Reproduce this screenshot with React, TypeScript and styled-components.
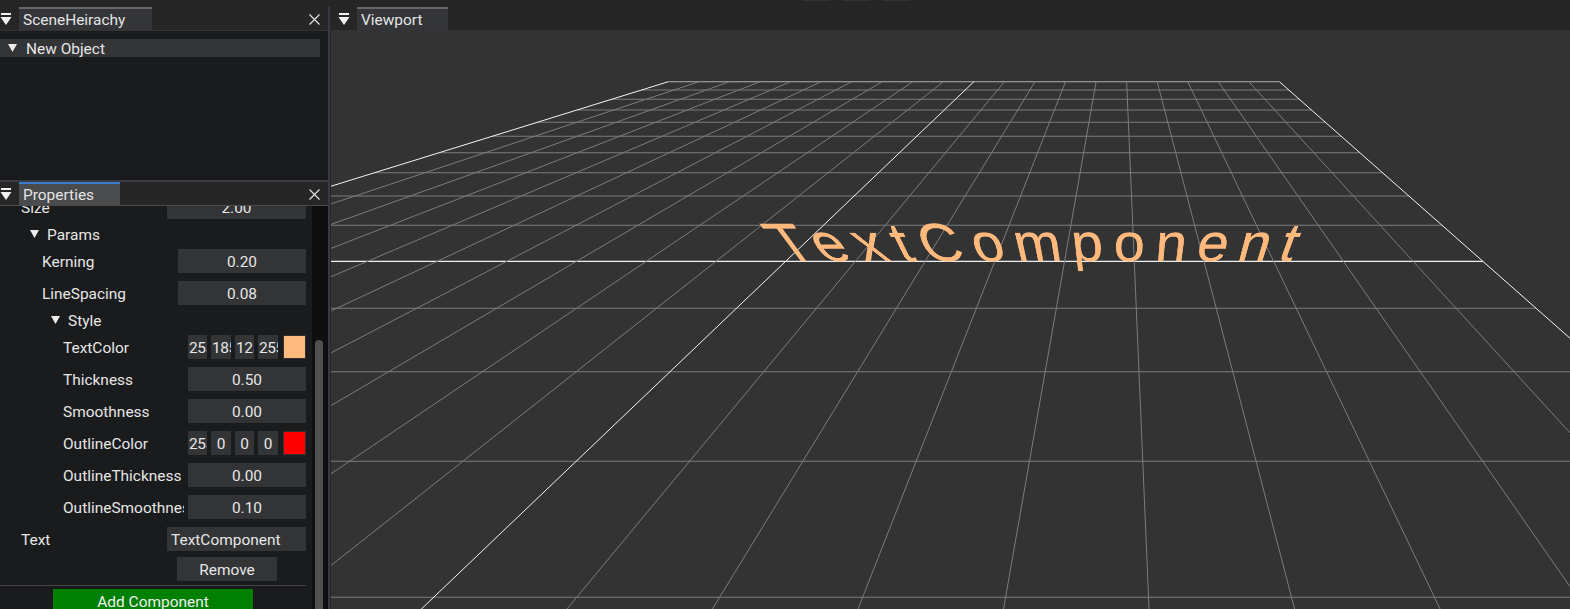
import React from 'react';
import styled, { createGlobalStyle } from 'styled-components';

const Global = createGlobalStyle`
  html, body { margin: 0; padding: 0; background: #262627; overflow: hidden; }
  #root { width: 1570px; height: 609px; }
`;

const Dock = styled.div`
  position: relative;
  display: flex;
  width: 1570px;
  height: 609px;
  overflow: hidden;
  background: #262627;
  color: #e6e6e6;
  font-family: Roboto, "Liberation Sans", sans-serif;
  font-size: 15.45px;
`;

const LeftColumn = styled.div`
  display: flex;
  flex-direction: column;
  width: 328px;
  flex: none;
`;

const Splitter = styled.div`
  width: 3px;
  flex: none;
  box-sizing: border-box;
  margin-top: 7px;
  background: #3a3a44;
  border-right: 1px solid #262627;
`;

const RightColumn = styled.div`
  display: flex;
  flex-direction: column;
  flex: 1;
  min-width: 0;
`;

const TitleBar = styled.div<{ $h: number; $line?: string; $pad: number }>`
  display: flex;
  align-items: flex-end;
  flex: none;
  box-sizing: border-box;
  height: ${p => p.$h}px;
  background: #262627;
  border-bottom: ${p => (p.$line ? `1px solid ${p.$line}` : 'none')};
  padding-left: ${p => p.$pad}px;
`;

const MenuButton = styled.svg`
  width: 12px;
  height: 12px;
  flex: none;
  margin: 0 7px 5px 0;
`;

const Tab = styled.div<{ $w: number; $bg: string; $over: string; $h: number }>`
  width: ${p => p.$w}px;
  height: ${p => p.$h}px;
  box-sizing: border-box;
  background: ${p => p.$bg};
  border-top: 2px solid ${p => p.$over};
  padding-left: 4px;
  line-height: ${p => p.$h}px;
  overflow: hidden;
  color: #e4e4e4;
`;

const CloseIcon = styled.svg<{ $b: number }>`
  width: 11px;
  height: 11px;
  flex: none;
  margin: 0 8px ${p => p.$b}px auto;
`;

const Panel = styled.div`
  background: #1a1b1d;
  flex: none;
  height: 149px;
  padding-top: 8px;
  box-sizing: border-box;
`;

const TreeRow = styled.div`
  display: flex;
  align-items: center;
  width: 320px;
  height: 18px;
  background: #333436;
  padding-left: 8px;
  box-sizing: border-box;
  gap: 9px;
`;

const NodeText = styled.span`
  padding-top: 2px;
`;

const Caret = styled.svg`
  width: 9px;
  height: 8px;
  flex: none;
`;

const HSplit = styled.div`
  height: 2px;
  flex: none;
  background: #3a3a44;
`;

const PropsBody = styled.div`
  position: relative;
  flex: 1;
  min-height: 0;
  display: flex;
  background: #1a1b1d;
  overflow: hidden;
`;

const PropsContent = styled.div`
  width: 306px;
  flex: none;
  display: flex;
  flex-direction: column;
  margin-top: -11px;
`;

const Row = styled.div<{ $indent: number; $mt?: number }>`
  display: flex;
  align-items: center;
  flex: none;
  height: 24px;
  padding-left: ${p => p.$indent}px;
  margin-top: ${p => p.$mt ?? 8}px;
`;

const Label = styled.div<{ $w: number }>`
  flex: none;
  width: ${p => p.$w}px;
  padding-top: 2px;
  overflow: hidden;
  white-space: nowrap;
`;

const Field = styled.div<{ $align?: string; $w?: number; $ml?: number }>`
  flex: ${p => (p.$w ? 'none' : '1')};
  width: ${p => (p.$w ? `${p.$w}px` : 'auto')};
  margin-left: ${p => p.$ml ?? 0}px;
  height: 24px;
  line-height: 26px;
  background: #333436;
  text-align: ${p => p.$align ?? 'center'};
  padding: 0 ${p => (p.$align === 'left' ? 4 : 0)}px;
  overflow: hidden;
  white-space: nowrap;
  box-sizing: border-box;
`;

const ColorFields = styled.div`
  display: flex;
  flex: 1;
  gap: 4px;
`;

const MiniField = styled.div<{ $w: number; $clip: boolean }>`
  flex: none;
  width: ${p => p.$w}px;
  height: 24px;
  line-height: 26px;
  background: #333436;
  overflow: hidden;
  white-space: nowrap;
  box-sizing: border-box;
  text-align: ${p => (p.$clip ? 'left' : 'center')};
  padding-left: ${p => (p.$clip ? 1 : 0)}px;
  letter-spacing: ${p => (p.$clip ? '-0.4px' : '0')};
`;

const Swatch = styled.div<{ $c: string }>`
  flex: none;
  width: 23px;
  height: 24px;
  margin-left: 1px;
  box-sizing: border-box;
  background: ${p => p.$c};
  border: 1px solid #303030;
`;

const TreeNode = styled.div<{ $indent: number; $mt: number }>`
  display: flex;
  align-items: center;
  flex: none;
  height: 18px;
  gap: 8px;
  padding-left: ${p => p.$indent}px;
  margin-top: ${p => p.$mt}px;
`;

const RemoveButton = styled.div`
  flex: none;
  align-self: flex-start;
  margin: 6px 0 0 177px;
  width: 100px;
  height: 24px;
  line-height: 26px;
  text-align: center;
  background: #333436;
`;

const Separator = styled.div`
  flex: none;
  height: 1px;
  margin-top: 4px;
  background: #444446;
`;

const AddButton = styled.div`
  flex: none;
  align-self: flex-start;
  margin: 3px 0 0 53px;
  width: 200px;
  height: 24px;
  line-height: 27px;
  text-align: center;
  background: #008000;
  color: #f0f0f0;
`;

const Scrollbar = styled.div`
  position: absolute;
  left: 312px;
  top: 0;
  bottom: 0;
  width: 16px;
  background: #0f0f10;
`;

const ScrollThumb = styled.div`
  position: absolute;
  left: 3px;
  top: 134px;
  bottom: -20px;
  width: 8px;
  border-radius: 4px;
  background: #505051;
`;

const TopMarks = styled.div`
  position: absolute;
  left: 803px;
  top: 0;
  display: flex;
  gap: 13px;
`;

const TopMark = styled.div`
  width: 27px;
  height: 1px;
  background: #333334;
`;

const ViewportArea = styled.div`
  position: relative;
  flex: 1;
  min-height: 0;
  background: #333333;
  overflow: hidden;
`;

const GridSvg = styled.svg`
  display: block;
  width: 1239px;
  height: 579px;
`;

const WorldText = styled.div`
  position: absolute;
  left: 0;
  top: 0;
  width: 507px;
  height: 38px;
  line-height: 38px;
  font-family: "Liberation Sans", Arial, sans-serif;
  font-size: 54px;
  letter-spacing: 10.5px;
  white-space: nowrap;
  color: #ffb97d;
  -webkit-text-stroke: 0.4px #ffb97d;
  transform-origin: 0 0;
`;

type P = [number, number];
function quadMatrix(w: number, h: number, p0: P, p1: P, p2: P, p3: P) {
  const [x0, y0] = p0, [x1, y1] = p1, [x2, y2] = p2, [x3, y3] = p3;
  const dx1 = x1 - x2, dx2 = x3 - x2, dx3 = x0 - x1 + x2 - x3;
  const dy1 = y1 - y2, dy2 = y3 - y2, dy3 = y0 - y1 + y2 - y3;
  const den = dx1 * dy2 - dx2 * dy1;
  const g = (dx3 * dy2 - dx2 * dy3) / den;
  const k = (dx1 * dy3 - dx3 * dy1) / den;
  const a = x1 - x0 + g * x1, b = x3 - x0 + k * x3;
  const d = y1 - y0 + g * y1, e = y3 - y0 + k * y3;
  return `matrix3d(${[a / w, d / w, 0, g / w, b / h, e / h, 0, k / h, 0, 0, 1, 0, x0, y0, 0, 1].join(',')})`;
}

const OX = 331;
const OY = 30;
const VP: P = [1120.7, -58.4];
const FAR_Y = 81.7;
const HORIZ = [81.7, 90, 99.3, 110, 122.3, 136.3, 152.7, 172.7, 196, 225.3, 261.3, 308.3, 371.7, 461.3, 597.3];
const edgeX = (x: number, y: number) => VP[0] + (x - VP[0]) * (y - VP[1]) / (FAR_Y - VP[1]);

const Grid: React.FC = () => {
  const farL = 668.4;
  const step = 30.55;
  const depthLines = Array.from({ length: 21 }, (_, i) => {
    const x = farL + i * step;
    const bottom = 640;
    return { i, x1: x - OX, y1: FAR_Y - OY, x2: edgeX(x, bottom) - OX, y2: bottom - OY };
  });
  return (
    <GridSvg viewBox="0 0 1239 579">
      {HORIZ.map((y, idx) => (
        <line
          key={y}
          x1={edgeX(farL, y) - OX}
          x2={edgeX(farL + 20 * step, y) - OX}
          y1={y - OY}
          y2={y - OY}
          stroke={idx === 10 ? '#f0f0f0' : idx === 0 ? '#b0b0b0' : '#7c7c7c'}
          strokeWidth={idx === 10 ? 1.2 : 1.1}
        />
      ))}
      {depthLines.map(l => (
        <line
          key={l.i}
          x1={l.x1}
          y1={l.y1}
          x2={l.x2}
          y2={l.y2}
          stroke={l.i % 10 === 0 ? '#f4f4f4' : '#7c7c7c'}
          strokeWidth={1}
        />
      ))}
    </GridSvg>
  );
};

const MenuGlyph = () => (
  <MenuButton viewBox="0 0 12 12">
    <rect x="1" y="0" width="10" height="2" fill="#f0f0f0" />
    <path d="M0.5 4H11.5L6 12Z" fill="#f0f0f0" />
  </MenuButton>
);

const Close = ({ b }: { b: number }) => (
  <CloseIcon $b={b} viewBox="0 0 11 11">
    <path d="M0.5 0.5L10.5 10.5M10.5 0.5L0.5 10.5" stroke="#e8e8e8" strokeWidth="1.1" fill="none" />
  </CloseIcon>
);

const Down = () => (
  <Caret viewBox="0 0 9 8">
    <path d="M0 0H9L4.5 8Z" fill="#ececec" />
  </Caret>
);

const Clip = ({ v, w }: { v: string; w: number }) => (
  <MiniField $w={w} $clip={v.length > 1}>{v}</MiniField>
);

const widths = [19, 20, 19, 20];

export default function App() {
  const textTransform = quadMatrix(507, 38, [757.6 - OX, 223 - OY], [1308.8 - OX, 223 - OY], [1294 - OX, 261 - OY], [787 - OX, 261 - OY]);
  return (
    <Dock>
      <Global />
      <TopMarks>
        <TopMark />
        <TopMark />
        <TopMark />
      </TopMarks>
      <LeftColumn>
        <TitleBar $h={31} $line="#333334" $pad={0}>
          <MenuGlyph />
          <Tab $w={133} $h={23} $bg="#333538" $over="#68686a">SceneHeirachy</Tab>
          <Close b={5} />
        </TitleBar>
        <Panel>
          <TreeRow>
            <Down />
            <NodeText>New Object</NodeText>
          </TreeRow>
        </Panel>
        <HSplit />
        <TitleBar $h={24} $line="#4b4b4c" $pad={0}>
          <MenuGlyph />
          <Tab $w={101} $h={23} $bg="#4a4b4c" $over="#3b7bcd">Properties</Tab>
          <Close b={5} />
        </TitleBar>
        <PropsBody>
          <PropsContent>
            <Row $indent={21} $mt={0}>
              <Label $w={146}>Size</Label>
              <Field>2.00</Field>
            </Row>
            <TreeNode $indent={30} $mt={6}><Down /><NodeText>Params</NodeText></TreeNode>
            <Row $indent={42} $mt={6}><Label $w={136}>Kerning</Label><Field>0.20</Field></Row>
            <Row $indent={42}><Label $w={136}>LineSpacing</Label><Field>0.08</Field></Row>
            <TreeNode $indent={51} $mt={6}><Down /><NodeText>Style</NodeText></TreeNode>
            <Row $indent={63} $mt={6}>
              <Label $w={125}>TextColor</Label>
              <ColorFields>
                {['255', '185', '125', '255'].map((v, i) => <Clip key={i} v={v} w={widths[i]} />)}
                <Swatch $c="#ffb97d" />
              </ColorFields>
            </Row>
            <Row $indent={63}><Label $w={125}>Thickness</Label><Field>0.50</Field></Row>
            <Row $indent={63}><Label $w={125}>Smoothness</Label><Field>0.00</Field></Row>
            <Row $indent={63}>
              <Label $w={125}>OutlineColor</Label>
              <ColorFields>
                {['255', '0', '0', '0'].map((v, i) => <Clip key={i} v={v} w={widths[i]} />)}
                <Swatch $c="#ff0000" />
              </ColorFields>
            </Row>
            <Row $indent={63}><Label $w={125}>OutlineThickness</Label><Field>0.00</Field></Row>
            <Row $indent={63}>
              <Label $w={121}>OutlineSmoothness</Label>
              <Field $w={118} $ml={4}>0.10</Field>
            </Row>
            <Row $indent={21}>
              <Label $w={146}>Text</Label>
              <Field $align="left">TextComponent</Field>
            </Row>
            <RemoveButton>Remove</RemoveButton>
            <Separator />
            <AddButton>Add Component</AddButton>
          </PropsContent>
          <Scrollbar>
            <ScrollThumb />
          </Scrollbar>
        </PropsBody>
      </LeftColumn>
      <Splitter />
      <RightColumn>
        <TitleBar $h={30} $pad={7}>
          <MenuGlyph />
          <Tab $w={91} $h={23} $bg="#333538" $over="#68686a">Viewport</Tab>
        </TitleBar>
        <ViewportArea>
          <Grid />
          <WorldText style={{ transform: textTransform }}>TextComponent</WorldText>
        </ViewportArea>
      </RightColumn>
    </Dock>
  );
}
